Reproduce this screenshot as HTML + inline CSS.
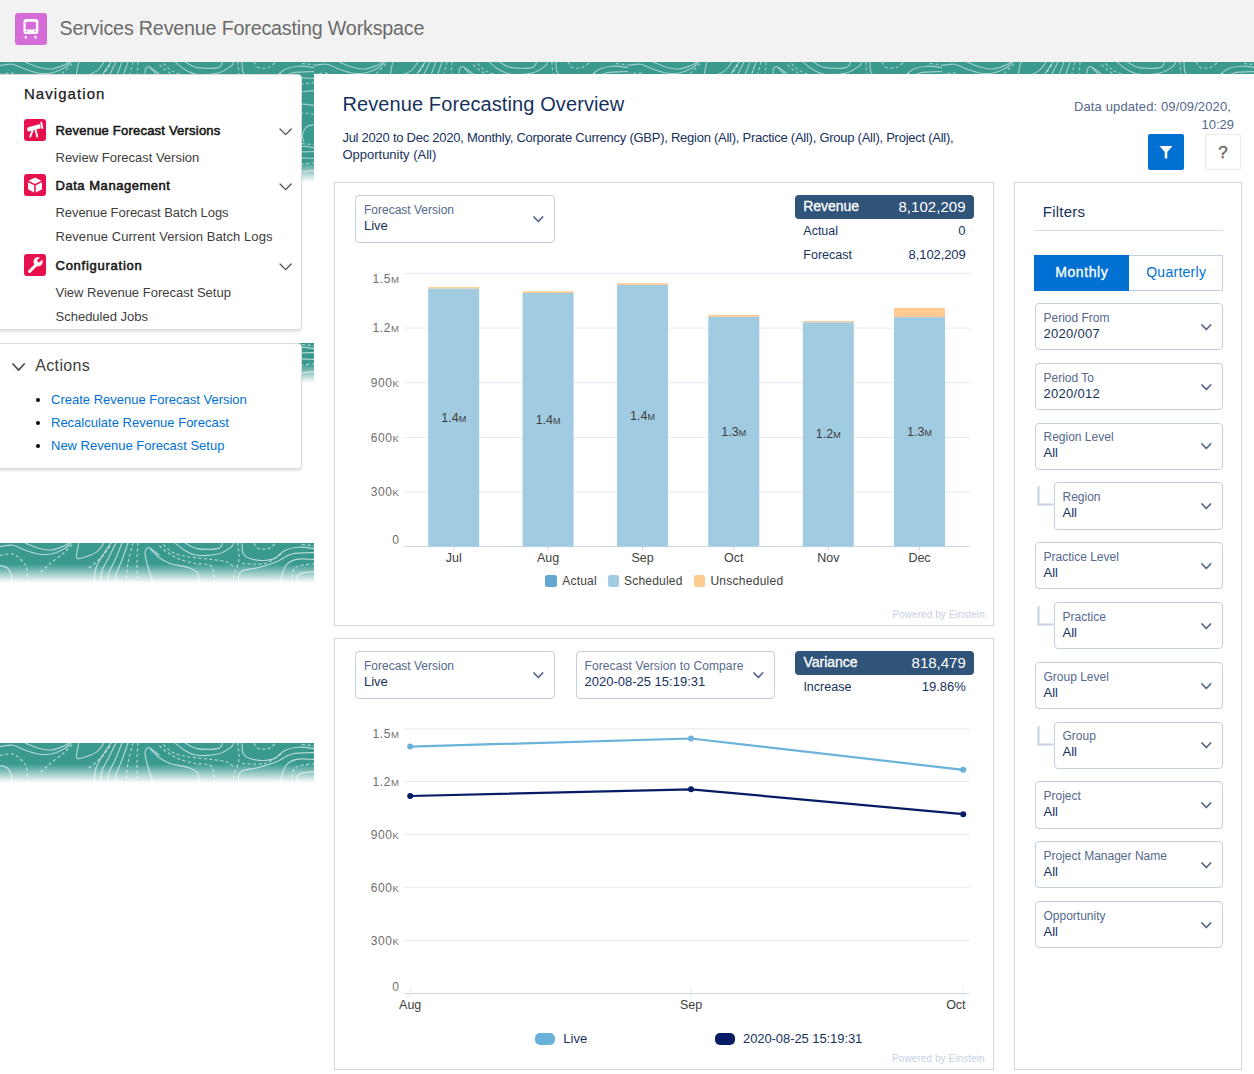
<!DOCTYPE html>
<html><head><meta charset="utf-8">
<style>
*{box-sizing:border-box;margin:0;padding:0}
html,body{width:1254px;height:1074px;overflow:hidden;background:#fff;font-family:"Liberation Sans",sans-serif;color:#16325c}
.abs{position:absolute}
.t{position:absolute;white-space:nowrap}
.sc{font-size:75%}
</style></head>
<body>
<div class="abs" style="left:0px;top:0px;width:1254px;height:62px;background:#f3f2f2"></div>
<div class="abs" style="left:15px;top:13px;width:32px;height:32px;background:#d56cd8;border-radius:3px"></div>
<svg class="abs" style="left:15px;top:13px" width="32" height="32" viewBox="0 0 32 32">
<rect x="8.5" y="6" width="14.8" height="15.1" rx="2.6" fill="#fff"/>
<rect x="10.6" y="8.7" width="10.3" height="7.9" rx="1.3" fill="#d56cd8"/>
<circle cx="11.2" cy="18.6" r="0.8" fill="#d56cd8"/><circle cx="20.2" cy="18.6" r="0.8" fill="#d56cd8"/>
<ellipse cx="10.8" cy="24.2" rx="1.2" ry="1.5" fill="#fff" transform="rotate(30 10.8 24.2)"/>
<ellipse cx="20.4" cy="24.2" rx="1.2" ry="1.5" fill="#fff" transform="rotate(-30 20.4 24.2)"/>
</svg>
<div class="t" style="left:59.50px;top:18.52px;font-size:19.7px;line-height:19.7px;color:#6a6a6a;letter-spacing:-0.181px">Services Revenue Forecasting Workspace</div>
<svg width="0" height="0" style="position:absolute"><defs><g id="pat" fill="none" stroke="#fff" stroke-opacity=".62" stroke-width="1.15"><path d="M0.0 3.5 C2.1 3.3 8.6 1.6 12.8 2.2 C17.1 2.8 21.3 5.8 25.5 7.3 C29.7 8.8 33.8 10.4 38.0 11.0 C42.2 11.6 46.7 11.8 51.0 11.0 C55.3 10.2 60.7 7.8 64.0 6.0 C67.3 4.2 69.8 1.0 71.0 0.0"/><path d="M25.0 0.0 C27.2 0.8 33.7 3.8 38.0 5.0 C42.3 6.2 46.7 7.3 51.0 7.0 C55.3 6.7 60.8 4.3 64.0 3.0 C67.2 1.7 69.0 -0.3 70.0 -1.0"/><path d="M0.0 12.4 C2.1 12.2 9.2 10.2 12.8 11.1 C16.4 11.9 19.4 15.2 21.7 17.5 C24.0 19.9 25.9 21.4 26.8 25.2 C27.8 28.9 27.3 37.5 27.4 40.0" stroke-dasharray="3 2.5"/><path d="M40.8 29.0 C42.5 27.5 47.2 23.2 51.0 20.0 C54.8 16.8 60.0 13.2 63.8 9.9 C67.6 6.6 72.3 1.7 74.0 0.0" stroke-dasharray="3 2.5"/><path d="M0.0 22.6 C1.3 23.0 5.8 23.5 7.7 25.2 C9.6 26.9 11.1 30.3 11.5 32.8 C11.9 35.3 10.4 38.8 10.2 40.0"/><path d="M79.0 -1.0 C78.6 1.4 76.1 11.0 76.5 13.7 C76.9 16.4 78.2 15.8 81.6 15.0 C85.0 14.2 93.2 11.3 97.0 8.6 C100.8 5.9 103.3 0.6 104.6 -1.0"/><path d="M89.0 25.0 C90.8 23.5 96.3 19.2 99.5 16.0 C102.7 12.8 106.1 8.7 108.0 6.0 C109.9 3.3 110.5 1.0 111.0 0.0" stroke-dasharray="3 2.5"/><path d="M111.0 0.0 C109.7 2.0 105.5 7.8 103.0 12.0 C100.5 16.2 97.5 20.3 96.0 25.0 C94.5 29.7 94.3 37.5 94.0 40.0"/><path d="M116.0 0.0 C114.8 2.3 111.3 9.3 109.0 14.0 C106.7 18.7 103.3 23.7 102.0 28.0 C100.7 32.3 101.2 38.0 101.0 40.0"/><path d="M122.0 0.0 C121.0 2.5 118.2 10.0 116.0 15.0 C113.8 20.0 110.3 25.8 109.0 30.0 C107.7 34.2 108.2 38.3 108.0 40.0"/><path d="M128.0 0.0 C127.0 2.8 124.0 11.7 122.0 17.0 C120.0 22.3 117.0 28.2 116.0 32.0 C115.0 35.8 116.0 38.7 116.0 40.0"/><path d="M133.0 0.0 C132.2 3.3 129.2 13.3 128.0 20.0 C126.8 26.7 126.3 36.7 126.0 40.0" stroke-dasharray="3 2.5"/><path d="M138.0 0.0 C137.8 3.3 137.0 13.3 137.0 20.0 C137.0 26.7 137.8 36.7 138.0 40.0" stroke-dasharray="3 2.5"/><path d="M159.4 12.4 C157.7 11.1 151.4 5.1 149.0 4.7 C146.6 4.3 145.2 6.7 145.0 9.9 C144.8 13.1 146.7 19.0 148.0 24.0 C149.3 29.0 152.2 37.3 153.0 40.0"/><path d="M150.0 5.6 C151.3 6.9 154.7 11.2 158.0 13.7 C161.3 16.2 165.0 18.7 170.0 20.5 C175.0 22.3 183.4 22.9 188.0 24.5 C192.6 26.1 195.7 27.4 197.5 30.0 C199.3 32.6 198.8 38.3 199.0 40.0"/><path d="M174.0 -1.0 C175.7 0.3 180.2 4.8 184.0 7.0 C187.8 9.2 191.3 11.6 197.0 12.3 C202.7 13.0 212.3 12.3 218.0 11.0 C223.7 9.7 228.3 6.2 231.0 4.2 C233.7 2.2 233.5 -0.1 234.0 -1.0"/><path d="M184.0 -1.0 C186.2 0.1 191.3 4.5 197.0 5.6 C202.7 6.7 213.7 6.7 218.0 5.6 C222.3 4.5 222.2 0.1 223.0 -1.0"/><path d="M159.5 2.8 C160.8 3.9 164.2 7.3 167.6 9.6 C171.0 11.9 175.3 14.6 180.0 16.4 C184.7 18.2 190.8 19.4 196.0 20.5 C201.2 21.6 207.8 19.8 211.0 23.0 C214.2 26.2 214.3 37.2 215.0 40.0" stroke-dasharray="3 2.5"/><path d="M163.5 1.5 C165.1 2.8 168.9 7.6 173.0 9.6 C177.1 11.6 181.7 12.6 188.0 13.7 C194.3 14.8 204.5 15.5 211.0 16.4 C217.5 17.3 223.2 17.6 227.0 19.0 C230.8 20.4 232.8 23.6 234.0 24.5" stroke-dasharray="3 2.5"/><path d="M238.0 0.0 C238.0 0.7 237.8 1.5 238.0 4.2 C238.2 6.9 239.7 11.6 239.0 16.4 C238.3 21.1 235.1 28.8 234.0 32.7 C232.9 36.6 232.9 38.8 232.7 40.0" stroke-dasharray="3 2.5"/><path d="M242.0 -1.0 C242.2 1.0 241.7 8.1 243.5 11.0 C245.3 13.9 248.2 15.5 253.0 16.4 C257.8 17.3 266.6 18.0 272.0 16.4 C277.4 14.8 281.1 9.0 285.6 7.0 C290.1 5.0 294.3 4.4 299.0 4.2 C303.7 4.0 311.5 5.4 314.0 5.6"/><path d="M254.0 0.0 C254.8 0.9 256.2 4.7 258.5 5.6 C260.8 6.5 265.1 6.5 268.0 5.6 C270.9 4.7 274.7 0.9 276.0 0.0" stroke-dasharray="3 2.5"/><path d="M302.0 1.5L314.0 2.8" stroke-dasharray="3 2.5"/><path d="M242.0 20.5 C244.8 20.6 254.0 21.2 258.5 21.0 C263.0 20.8 264.9 20.9 269.0 19.0 C273.1 17.1 280.7 11.2 283.0 9.6" stroke-dasharray="3 2.5"/><path d="M238.0 40.0 C238.5 38.1 237.6 31.2 241.0 28.6 C244.4 26.0 252.7 26.1 258.5 24.5 C264.3 22.9 270.4 21.2 276.0 19.0 C281.6 16.8 285.7 12.6 292.0 11.0 C298.3 9.4 310.3 9.8 314.0 9.6"/><path d="M280.0 40.0 C280.9 37.2 282.9 26.9 285.6 23.0 C288.3 19.1 291.7 17.5 296.4 16.4 C301.1 15.3 311.1 16.4 314.0 16.4"/><path d="M291.0 40.0 C291.4 37.8 292.4 29.8 293.7 27.0 C295.0 24.2 295.6 24.1 299.0 23.0 C302.4 21.9 311.5 20.9 314.0 20.5" stroke-dasharray="3 2.5"/><path d="M296.4 40.0 C296.8 38.5 296.1 32.9 299.0 31.0 C301.9 29.1 311.5 29.0 314.0 28.6"/></g></defs></svg>
<div class="abs" style="left:0;top:62px;width:1254px;height:120px;overflow:hidden;background:#3a9a90">
<svg width="1254" height="120" style="position:absolute;left:0;top:0;opacity:0.85"><use href="#pat" x="0" y="0"/><use href="#pat" transform="translate(314 40) scale(-1 1)"/><use href="#pat" x="0" y="80"/><use href="#pat" transform="translate(314 120) scale(-1 1)"/><use href="#pat" x="314" y="0"/><use href="#pat" transform="translate(628 40) scale(-1 1)"/><use href="#pat" x="314" y="80"/><use href="#pat" transform="translate(628 120) scale(-1 1)"/><use href="#pat" x="628" y="0"/><use href="#pat" transform="translate(942 40) scale(-1 1)"/><use href="#pat" x="628" y="80"/><use href="#pat" transform="translate(942 120) scale(-1 1)"/><use href="#pat" x="942" y="0"/><use href="#pat" transform="translate(1256 40) scale(-1 1)"/><use href="#pat" x="942" y="80"/><use href="#pat" transform="translate(1256 120) scale(-1 1)"/></svg>
<div class="abs" style="left:0;top:0;width:1254px;height:120px;background:linear-gradient(rgba(255,255,255,0) 0,rgba(255,255,255,0) 100px,#fff 120px)"></div>
</div>
<div class="abs" style="left:0;top:343px;width:314px;height:40px;overflow:hidden;background:#3a9a90">
<svg width="314" height="40" style="position:absolute;left:0;top:0;opacity:1"><use href="#pat" x="0" y="0"/><use href="#pat" transform="translate(314 40) scale(-1 1)"/><use href="#pat" x="314" y="0"/><use href="#pat" transform="translate(628 40) scale(-1 1)"/></svg>
<div class="abs" style="left:0;top:0;width:314px;height:40px;background:linear-gradient(rgba(255,255,255,0) 0,rgba(255,255,255,0) 21px,#fff 40px)"></div>
</div>
<div class="abs" style="left:0;top:543px;width:314px;height:40px;overflow:hidden;background:#3a9a90">
<svg width="314" height="40" style="position:absolute;left:0;top:0;opacity:1"><use href="#pat" x="0" y="0"/><use href="#pat" transform="translate(314 40) scale(-1 1)"/><use href="#pat" x="314" y="0"/><use href="#pat" transform="translate(628 40) scale(-1 1)"/></svg>
<div class="abs" style="left:0;top:0;width:314px;height:40px;background:linear-gradient(rgba(255,255,255,0) 0,rgba(255,255,255,0) 21px,#fff 40px)"></div>
</div>
<div class="abs" style="left:0;top:743px;width:314px;height:40px;overflow:hidden;background:#3a9a90">
<svg width="314" height="40" style="position:absolute;left:0;top:0;opacity:1"><use href="#pat" x="0" y="0"/><use href="#pat" transform="translate(314 40) scale(-1 1)"/><use href="#pat" x="314" y="0"/><use href="#pat" transform="translate(628 40) scale(-1 1)"/></svg>
<div class="abs" style="left:0;top:0;width:314px;height:40px;background:linear-gradient(rgba(255,255,255,0) 0,rgba(255,255,255,0) 21px,#fff 40px)"></div>
</div>
<div class="abs" style="left:-5px;top:74px;width:307px;height:256px;background:#fff;border:1px solid #dddbda;border-radius:4px;box-shadow:0 2px 2px rgba(0,0,0,.10)"></div>
<div class="abs" style="left:-5px;top:343px;width:307px;height:126px;background:#fff;border:1px solid #dddbda;border-radius:4px;box-shadow:0 2px 2px rgba(0,0,0,.10)"></div>
<div class="t" style="left:23.90px;top:86.10px;font-size:15px;line-height:15px;color:#181818;letter-spacing:1.073px;-webkit-text-stroke:0.25px #181818">Navigation</div>
<div class="abs" style="left:24px;top:119px;width:22px;height:22px;background:#e8104c;border-radius:3px"></div>
<svg class="abs" style="left:24px;top:119px" width="22" height="22" viewBox="0 0 22 22">
<path d="M3.2 9.6 Q3 8.6 4.2 8.2 L16.2 5 L16.6 9.2 L5 12.4 Q3.6 12.6 3.4 11.4 Z" fill="#fff"/>
<path d="M17.3 3.6 L18.3 9" stroke="#fff" stroke-width="1.9" stroke-linecap="round"/>
<path d="M8.6 11.6 L6.3 17.6" stroke="#fff" stroke-width="1.9" stroke-linecap="round"/>
<path d="M11.6 11 L13.2 17.6" stroke="#fff" stroke-width="1.9" stroke-linecap="round"/>
</svg>
<div class="t" style="left:55.50px;top:123.79px;font-size:13px;line-height:13px;color:#181818;letter-spacing:0.213px;-webkit-text-stroke:0.55px #181818">Revenue Forecast Versions</div>
<svg class="abs" style="left:277.5px;top:127.19999999999999px" width="15.2" height="9.6" viewBox="0 0 15.2 9.6"><path d="M2.0 2.0 L7.6 7.6 L13.2 2.0" fill="none" stroke="#514f4d" stroke-width="1.3" stroke-linecap="round" stroke-linejoin="round"/></svg>
<div class="t" style="left:55.50px;top:150.79px;font-size:13px;line-height:13px;color:#3e3e3c">Review Forecast Version</div>
<div class="abs" style="left:24px;top:174px;width:22px;height:22px;background:#e8104c;border-radius:3px"></div>
<svg class="abs" style="left:24px;top:174px" width="22" height="22" viewBox="0 0 22 22">
<path d="M11 3.5 L17.5 6.8 L11 10 L4.5 6.8 Z" fill="#fff"/>
<path d="M4 8.2 L10.2 11.3 L10.2 18.5 L4 15.3 Z" fill="#fff"/>
<path d="M18 8.2 L11.8 11.3 L11.8 18.5 L18 15.3 Z" fill="#fff"/>
</svg>
<div class="t" style="left:55.50px;top:178.79px;font-size:13px;line-height:13px;color:#181818;letter-spacing:0.537px;-webkit-text-stroke:0.55px #181818">Data Management</div>
<svg class="abs" style="left:277.5px;top:182.2px" width="15.2" height="9.6" viewBox="0 0 15.2 9.6"><path d="M2.0 2.0 L7.6 7.6 L13.2 2.0" fill="none" stroke="#514f4d" stroke-width="1.3" stroke-linecap="round" stroke-linejoin="round"/></svg>
<div class="t" style="left:55.50px;top:205.59px;font-size:13px;line-height:13px;color:#3e3e3c;letter-spacing:-0.069px">Revenue Forecast Batch Logs</div>
<div class="t" style="left:55.50px;top:230.39px;font-size:13px;line-height:13px;color:#3e3e3c;letter-spacing:0.070px">Revenue Current Version Batch Logs</div>
<div class="abs" style="left:24px;top:254px;width:22px;height:22px;background:#e8104c;border-radius:3px"></div>
<svg class="abs" style="left:24px;top:254px" width="22" height="22" viewBox="0 0 22 22">
<path d="M5.6 17.4 L12 11" stroke="#fff" stroke-width="3" stroke-linecap="round"/>
<circle cx="14.1" cy="7.8" r="4.6" fill="#fff"/>
<path d="M12.8 6.6 L15 8.8 L20.5 3.3 L18.3 1.1 Z" fill="#e8104c"/>
</svg>
<div class="t" style="left:55.50px;top:258.79px;font-size:13px;line-height:13px;color:#181818;letter-spacing:0.744px;-webkit-text-stroke:0.55px #181818">Configuration</div>
<svg class="abs" style="left:277.5px;top:262.2px" width="15.2" height="9.6" viewBox="0 0 15.2 9.6"><path d="M2.0 2.0 L7.6 7.6 L13.2 2.0" fill="none" stroke="#514f4d" stroke-width="1.3" stroke-linecap="round" stroke-linejoin="round"/></svg>
<div class="t" style="left:55.50px;top:285.59px;font-size:13px;line-height:13px;color:#3e3e3c">View Revenue Forecast Setup</div>
<div class="t" style="left:55.50px;top:310.39px;font-size:13px;line-height:13px;color:#3e3e3c">Scheduled Jobs</div>
<svg class="abs" style="left:11.3px;top:361.6px" width="15.2" height="10.2" viewBox="0 0 15.2 10.2"><path d="M2.0 2.0 L7.6 8.2 L13.2 2.0" fill="none" stroke="#514f4d" stroke-width="1.7" stroke-linecap="round" stroke-linejoin="round"/></svg>
<div class="t" style="left:35.20px;top:357.75px;font-size:16px;line-height:16px;color:#3e3e3c;letter-spacing:0.362px">Actions</div>
<div class="abs" style="left:36.4px;top:397.5px;width:4px;height:4px;background:#080707;border-radius:50%"></div>
<div class="t" style="left:51.00px;top:392.99px;font-size:13px;line-height:13px;color:#0070d2">Create Revenue Forecast Version</div>
<div class="abs" style="left:36.4px;top:420.5px;width:4px;height:4px;background:#080707;border-radius:50%"></div>
<div class="t" style="left:51.00px;top:415.99px;font-size:13px;line-height:13px;color:#0070d2">Recalculate Revenue Forecast</div>
<div class="abs" style="left:36.4px;top:443.5px;width:4px;height:4px;background:#080707;border-radius:50%"></div>
<div class="t" style="left:51.00px;top:438.99px;font-size:13px;line-height:13px;color:#0070d2">New Revenue Forecast Setup</div>
<div class="abs" style="left:314px;top:74px;width:940px;height:1000px;background:#fff"></div>
<div class="t" style="left:342.40px;top:94.07px;font-size:20px;line-height:20px;color:#16325c;letter-spacing:0.107px">Revenue Forecasting Overview</div>
<div class="t" style="left:342.40px;top:130.69px;font-size:13px;line-height:13px;color:#16325c;letter-spacing:-0.253px">Jul 2020 to Dec 2020, Monthly, Corporate Currency (GBP), Region (All), Practice (All), Group (All), Project (All),</div>
<div class="t" style="left:342.40px;top:148.49px;font-size:13px;line-height:13px;color:#16325c">Opportunity (All)</div>
<div class="t" style="left:1074.00px;top:99.99px;font-size:13px;line-height:13px;color:#54698d;letter-spacing:0.122px">Data updated: 09/09/2020,</div>
<div class="t" style="left:1201.47px;top:117.79px;font-size:13px;line-height:13px;color:#54698d">10:29</div>
<div class="abs" style="left:1148px;top:134px;width:35.5px;height:35.5px;background:#0070d2;border-radius:2px"></div>
<svg class="abs" style="left:1148px;top:134px" width="36" height="36" viewBox="0 0 36 36">
<path d="M11.5 12 L24.5 12 L19.3 18 L19.3 24.5 L16.7 24.5 L16.7 18 Z" fill="#fff"/></svg>
<div class="abs" style="left:1205px;top:134px;width:35.5px;height:35.5px;background:#fff;border:1px solid #ebebeb;border-radius:2px"></div>
<div class="t" style="left:1218.27px;top:144.01px;font-size:17px;line-height:17px;color:#706e6b;-webkit-text-stroke:0.5px #706e6b">?</div>
<div class="abs" style="left:334px;top:182px;width:660px;height:444px;border:1px solid #d8d8d8"></div>
<div class="abs" style="left:334px;top:638px;width:660px;height:432px;border:1px solid #d8d8d8"></div>
<div class="abs" style="left:1014px;top:182px;width:228px;height:888px;border:1px solid #d8d8d8"></div>
<div class="abs" style="left:355px;top:195px;width:200px;height:47.5px;border:1px solid #c2cfdd;border-radius:4px;background:#fff"></div>
<div class="t" style="left:364.00px;top:203.74px;font-size:12px;line-height:12px;color:#54698d">Forecast Version</div>
<div class="t" style="left:364.00px;top:218.79px;font-size:13px;line-height:13px;color:#16325c">Live</div>
<svg class="abs" style="left:531.9px;top:214.7px" width="12.6" height="8.5" viewBox="0 0 12.6 8.5"><path d="M2.0 2.0 L6.3 6.5 L10.6 2.0" fill="none" stroke="#54698d" stroke-width="1.8" stroke-linecap="round" stroke-linejoin="round"/></svg>
<div class="abs" style="left:795px;top:195px;width:179px;height:23.5px;background:#2f5379;border-radius:4px"></div>
<div class="t" style="left:803.30px;top:199.15px;font-size:14px;line-height:14px;color:#fff;letter-spacing:-0.062px;-webkit-text-stroke:0.3px #fff">Revenue</div>
<div class="t" style="left:898.40px;top:198.80px;font-size:15px;line-height:15px;color:#fff;letter-spacing:0.053px">8,102,209</div>
<div class="t" style="left:803.30px;top:225.32px;font-size:12.5px;line-height:12.5px;color:#16325c">Actual</div>
<div class="t" style="left:958.37px;top:223.89px;font-size:13px;line-height:13px;color:#16325c">0</div>
<div class="t" style="left:803.30px;top:249.42px;font-size:12.5px;line-height:12.5px;color:#16325c">Forecast</div>
<div class="t" style="left:908.60px;top:247.99px;font-size:13px;line-height:13px;color:#16325c;letter-spacing:-0.092px">8,102,209</div>
<svg class="abs" style="left:0;top:0" width="1254" height="1074"><line x1="404" y1="273.4" x2="970" y2="273.4" stroke="#e5eaf1" stroke-width="1"/><line x1="404" y1="328.1" x2="970" y2="328.1" stroke="#e5eaf1" stroke-width="1"/><line x1="404" y1="382.7" x2="970" y2="382.7" stroke="#e5eaf1" stroke-width="1"/><line x1="404" y1="437.4" x2="970" y2="437.4" stroke="#e5eaf1" stroke-width="1"/><line x1="404" y1="492.0" x2="970" y2="492.0" stroke="#e5eaf1" stroke-width="1"/><line x1="404" y1="546.6" x2="970" y2="546.6" stroke="#c9d7e6" stroke-width="1"/><rect x="428.2" y="287.1" width="51" height="1.6" fill="#fdca8f"/><rect x="428.2" y="288.7" width="51" height="257.9" fill="#a1cbe1"/><line x1="453.7" y1="546.6" x2="453.7" y2="551" stroke="#c9d7e6" stroke-width="1"/><rect x="522.6" y="291.4" width="51" height="1.6" fill="#fdca8f"/><rect x="522.6" y="293.0" width="51" height="253.6" fill="#a1cbe1"/><line x1="548.1" y1="546.6" x2="548.1" y2="551" stroke="#c9d7e6" stroke-width="1"/><rect x="617.0" y="283.2" width="51" height="1.7" fill="#fdca8f"/><rect x="617.0" y="284.9" width="51" height="261.7" fill="#a1cbe1"/><line x1="642.5" y1="546.6" x2="642.5" y2="551" stroke="#c9d7e6" stroke-width="1"/><rect x="708.3" y="314.9" width="51" height="1.9" fill="#fdca8f"/><rect x="708.3" y="316.8" width="51" height="229.8" fill="#a1cbe1"/><line x1="733.8" y1="546.6" x2="733.8" y2="551" stroke="#c9d7e6" stroke-width="1"/><rect x="802.8" y="321.0" width="51" height="1.4" fill="#fdca8f"/><rect x="802.8" y="322.4" width="51" height="224.2" fill="#a1cbe1"/><line x1="828.3" y1="546.6" x2="828.3" y2="551" stroke="#c9d7e6" stroke-width="1"/><rect x="894.0" y="307.9" width="51" height="9.2" fill="#fdca8f"/><rect x="894.0" y="317.1" width="51" height="229.5" fill="#a1cbe1"/><line x1="919.5" y1="546.6" x2="919.5" y2="551" stroke="#c9d7e6" stroke-width="1"/></svg>
<div class="t" style="left:441.26px;top:411.57px;font-size:12.5px;line-height:12.5px;color:#3e3e3c">1.4<span style="font-size:9px">M</span></div>
<div class="t" style="left:445.71px;top:551.62px;font-size:12.5px;line-height:12.5px;color:#3e3e3c">Jul</div>
<div class="t" style="left:535.66px;top:413.72px;font-size:12.5px;line-height:12.5px;color:#3e3e3c">1.4<span style="font-size:9px">M</span></div>
<div class="t" style="left:536.98px;top:551.62px;font-size:12.5px;line-height:12.5px;color:#3e3e3c">Aug</div>
<div class="t" style="left:630.06px;top:409.67px;font-size:12.5px;line-height:12.5px;color:#3e3e3c">1.4<span style="font-size:9px">M</span></div>
<div class="t" style="left:631.38px;top:551.62px;font-size:12.5px;line-height:12.5px;color:#3e3e3c">Sep</div>
<div class="t" style="left:721.36px;top:425.62px;font-size:12.5px;line-height:12.5px;color:#3e3e3c">1.3<span style="font-size:9px">M</span></div>
<div class="t" style="left:724.08px;top:551.62px;font-size:12.5px;line-height:12.5px;color:#3e3e3c">Oct</div>
<div class="t" style="left:815.86px;top:428.42px;font-size:12.5px;line-height:12.5px;color:#3e3e3c">1.2<span style="font-size:9px">M</span></div>
<div class="t" style="left:817.19px;top:551.62px;font-size:12.5px;line-height:12.5px;color:#3e3e3c">Nov</div>
<div class="t" style="left:907.06px;top:425.77px;font-size:12.5px;line-height:12.5px;color:#3e3e3c">1.3<span style="font-size:9px">M</span></div>
<div class="t" style="left:908.39px;top:551.62px;font-size:12.5px;line-height:12.5px;color:#3e3e3c">Dec</div>
<div class="t" style="left:372.56px;top:272.64px;font-size:12px;line-height:12px;color:#706e6b;letter-spacing:0.55px">1.5<span style="font-size:9.5px">M</span></div>
<div class="t" style="left:372.56px;top:322.24px;font-size:12px;line-height:12px;color:#706e6b;letter-spacing:0.55px">1.2<span style="font-size:9.5px">M</span></div>
<div class="t" style="left:370.79px;top:376.84px;font-size:12px;line-height:12px;color:#706e6b;letter-spacing:0.55px">900<span style="font-size:9.5px">K</span></div>
<div class="t" style="left:370.79px;top:431.54px;font-size:12px;line-height:12px;color:#706e6b;letter-spacing:0.55px">600<span style="font-size:9.5px">K</span></div>
<div class="t" style="left:370.79px;top:486.14px;font-size:12px;line-height:12px;color:#706e6b;letter-spacing:0.55px">300<span style="font-size:9.5px">K</span></div>
<div class="t" style="left:392.13px;top:533.54px;font-size:12px;line-height:12px;color:#706e6b;letter-spacing:0.55px">0<span style="font-size:9.5px"></span></div>
<div class="abs" style="left:545.1px;top:575.1px;width:11.8px;height:11.5px;background:#62a8d0;border-radius:2.5px"></div>
<div class="t" style="left:562.30px;top:574.84px;font-size:12px;line-height:12px;color:#3e3e3c;letter-spacing:0.192px">Actual</div>
<div class="abs" style="left:607.5px;top:575.1px;width:11.8px;height:11.5px;background:#a1cbe1;border-radius:2.5px"></div>
<div class="t" style="left:624.10px;top:574.84px;font-size:12px;line-height:12px;color:#3e3e3c;letter-spacing:0.188px">Scheduled</div>
<div class="abs" style="left:693.7px;top:575.1px;width:11.8px;height:11.5px;background:#fdca8f;border-radius:2.5px"></div>
<div class="t" style="left:710.40px;top:574.84px;font-size:12px;line-height:12px;color:#3e3e3c;letter-spacing:0.269px">Unscheduled</div>
<div class="t" style="left:892.40px;top:609.53px;font-size:10px;line-height:10px;color:#c5d1e3;letter-spacing:0.065px">Powered by Einstein</div>
<div class="abs" style="left:355px;top:651px;width:200px;height:47.5px;border:1px solid #c2cfdd;border-radius:4px;background:#fff"></div>
<div class="t" style="left:364.00px;top:659.74px;font-size:12px;line-height:12px;color:#54698d">Forecast Version</div>
<div class="t" style="left:364.00px;top:674.79px;font-size:13px;line-height:13px;color:#16325c">Live</div>
<svg class="abs" style="left:531.9px;top:670.7px" width="12.6" height="8.5" viewBox="0 0 12.6 8.5"><path d="M2.0 2.0 L6.3 6.5 L10.6 2.0" fill="none" stroke="#54698d" stroke-width="1.8" stroke-linecap="round" stroke-linejoin="round"/></svg>
<div class="abs" style="left:575.5px;top:651px;width:199px;height:47.5px;border:1px solid #c2cfdd;border-radius:4px;background:#fff"></div>
<div class="t" style="left:584.50px;top:659.74px;font-size:12px;line-height:12px;color:#54698d;letter-spacing:0.109px">Forecast Version to Compare</div>
<div class="t" style="left:584.50px;top:674.79px;font-size:13px;line-height:13px;color:#16325c">2020-08-25 15:19:31</div>
<svg class="abs" style="left:752.4px;top:670.7px" width="12.6" height="8.5" viewBox="0 0 12.6 8.5"><path d="M2.0 2.0 L6.3 6.5 L10.6 2.0" fill="none" stroke="#54698d" stroke-width="1.8" stroke-linecap="round" stroke-linejoin="round"/></svg>
<div class="abs" style="left:795px;top:651px;width:179px;height:23.5px;background:#2f5379;border-radius:4px"></div>
<div class="t" style="left:803.40px;top:654.95px;font-size:14px;line-height:14px;color:#fff;-webkit-text-stroke:0.3px #fff">Variance</div>
<div class="t" style="left:911.58px;top:654.60px;font-size:15px;line-height:15px;color:#fff">818,479</div>
<div class="t" style="left:803.40px;top:681.32px;font-size:12.5px;line-height:12.5px;color:#16325c">Increase</div>
<div class="t" style="left:921.71px;top:679.89px;font-size:13px;line-height:13px;color:#16325c">19.86%</div>
<svg class="abs" style="left:0;top:0" width="1254" height="1074"><line x1="404.5" y1="728.8" x2="969.6" y2="728.8" stroke="#e5eaf1" stroke-width="1"/><line x1="404.5" y1="781.7" x2="969.6" y2="781.7" stroke="#e5eaf1" stroke-width="1"/><line x1="404.5" y1="834.7" x2="969.6" y2="834.7" stroke="#e5eaf1" stroke-width="1"/><line x1="404.5" y1="887.6" x2="969.6" y2="887.6" stroke="#e5eaf1" stroke-width="1"/><line x1="404.5" y1="940.5" x2="969.6" y2="940.5" stroke="#e5eaf1" stroke-width="1"/><line x1="404.5" y1="993.5" x2="969.6" y2="993.5" stroke="#c9d7e6" stroke-width="1"/><line x1="410.2" y1="987" x2="410.2" y2="998" stroke="#e5eaf1" stroke-width="1"/><line x1="691.0" y1="987" x2="691.0" y2="998" stroke="#e5eaf1" stroke-width="1"/><line x1="963.2" y1="987" x2="963.2" y2="998" stroke="#e5eaf1" stroke-width="1"/><polyline points="410.2,746.6 691,738.5 963.2,769.8" fill="none" stroke="#6ab2d9" stroke-width="2.2"/><polyline points="410.2,796 691,789.3 963.2,814.2" fill="none" stroke="#061c64" stroke-width="2.2"/><circle cx="410.2" cy="746.6" r="3" fill="#6ab2d9"/><circle cx="691.0" cy="738.5" r="3" fill="#6ab2d9"/><circle cx="963.2" cy="769.8" r="3" fill="#6ab2d9"/><circle cx="410.2" cy="796.0" r="3" fill="#061c64"/><circle cx="691.0" cy="789.3" r="3" fill="#061c64"/><circle cx="963.2" cy="814.2" r="3" fill="#061c64"/></svg>
<div class="t" style="left:372.56px;top:728.34px;font-size:12px;line-height:12px;color:#706e6b;letter-spacing:0.55px">1.5<span style="font-size:9.5px">M</span></div>
<div class="t" style="left:372.56px;top:775.84px;font-size:12px;line-height:12px;color:#706e6b;letter-spacing:0.55px">1.2<span style="font-size:9.5px">M</span></div>
<div class="t" style="left:370.79px;top:828.84px;font-size:12px;line-height:12px;color:#706e6b;letter-spacing:0.55px">900<span style="font-size:9.5px">K</span></div>
<div class="t" style="left:370.79px;top:881.74px;font-size:12px;line-height:12px;color:#706e6b;letter-spacing:0.55px">600<span style="font-size:9.5px">K</span></div>
<div class="t" style="left:370.79px;top:934.64px;font-size:12px;line-height:12px;color:#706e6b;letter-spacing:0.55px">300<span style="font-size:9.5px">K</span></div>
<div class="t" style="left:392.13px;top:981.04px;font-size:12px;line-height:12px;color:#706e6b;letter-spacing:0.55px">0<span style="font-size:9.5px"></span></div>
<div class="t" style="left:399.08px;top:998.92px;font-size:12.5px;line-height:12.5px;color:#3e3e3c">Aug</div>
<div class="t" style="left:679.88px;top:998.92px;font-size:12.5px;line-height:12.5px;color:#3e3e3c">Sep</div>
<div class="t" style="left:946.15px;top:998.92px;font-size:12.5px;line-height:12.5px;color:#3e3e3c">Oct</div>
<div class="abs" style="left:535.1px;top:1032.8px;width:20px;height:12.3px;background:#6ab2d9;border-radius:5px"></div>
<div class="t" style="left:563.30px;top:1032.09px;font-size:13px;line-height:13px;color:#16325c">Live</div>
<div class="abs" style="left:714.8px;top:1033px;width:20.4px;height:12.1px;background:#061c64;border-radius:5px"></div>
<div class="t" style="left:743.00px;top:1031.69px;font-size:13px;line-height:13px;color:#16325c;letter-spacing:-0.079px">2020-08-25 15:19:31</div>
<div class="t" style="left:892.10px;top:1053.53px;font-size:10px;line-height:10px;color:#c5d1e3;letter-spacing:0.076px">Powered by Einstein</div>
<div class="t" style="left:1042.80px;top:203.80px;font-size:15px;line-height:15px;color:#16325c;letter-spacing:0.224px">Filters</div>
<div class="abs" style="left:1034.4px;top:229.5px;width:188.3px;height:1px;background:#d8dde6"></div>
<div class="abs" style="left:1034px;top:255px;width:189px;height:36px;border:1px solid #c2cfdd;background:#fff"></div>
<div class="abs" style="left:1034px;top:255px;width:95.2px;height:36px;background:#0070d2"></div>
<div class="t" style="left:1055.15px;top:265.25px;font-size:14px;line-height:14px;color:#fff;letter-spacing:0.612px;-webkit-text-stroke:0.3px #fff">Monthly</div>
<div class="t" style="left:1146.20px;top:265.25px;font-size:14px;line-height:14px;color:#0070d2;letter-spacing:0.270px">Quarterly</div>
<div class="abs" style="left:1034.5px;top:303.0px;width:188.2px;height:47.3px;border:1px solid #c2cfdd;border-radius:4px;background:#fff"></div>
<div class="t" style="left:1043.50px;top:311.74px;font-size:12px;line-height:12px;color:#54698d">Period From</div>
<div class="t" style="left:1043.50px;top:326.79px;font-size:13px;line-height:13px;color:#16325c;letter-spacing:0.300px">2020/007</div>
<svg class="abs" style="left:1199.9px;top:322.7px" width="12.6" height="8.5" viewBox="0 0 12.6 8.5"><path d="M2.0 2.0 L6.3 6.5 L10.6 2.0" fill="none" stroke="#54698d" stroke-width="1.8" stroke-linecap="round" stroke-linejoin="round"/></svg>
<div class="abs" style="left:1034.5px;top:362.8px;width:188.2px;height:47.3px;border:1px solid #c2cfdd;border-radius:4px;background:#fff"></div>
<div class="t" style="left:1043.50px;top:371.54px;font-size:12px;line-height:12px;color:#54698d">Period To</div>
<div class="t" style="left:1043.50px;top:386.59px;font-size:13px;line-height:13px;color:#16325c;letter-spacing:0.300px">2020/012</div>
<svg class="abs" style="left:1199.9px;top:382.5px" width="12.6" height="8.5" viewBox="0 0 12.6 8.5"><path d="M2.0 2.0 L6.3 6.5 L10.6 2.0" fill="none" stroke="#54698d" stroke-width="1.8" stroke-linecap="round" stroke-linejoin="round"/></svg>
<div class="abs" style="left:1034.5px;top:422.6px;width:188.2px;height:47.3px;border:1px solid #c2cfdd;border-radius:4px;background:#fff"></div>
<div class="t" style="left:1043.50px;top:431.34px;font-size:12px;line-height:12px;color:#54698d">Region Level</div>
<div class="t" style="left:1043.50px;top:446.39px;font-size:13px;line-height:13px;color:#16325c">All</div>
<svg class="abs" style="left:1199.9px;top:442.3px" width="12.6" height="8.5" viewBox="0 0 12.6 8.5"><path d="M2.0 2.0 L6.3 6.5 L10.6 2.0" fill="none" stroke="#54698d" stroke-width="1.8" stroke-linecap="round" stroke-linejoin="round"/></svg>
<div class="abs" style="left:1053.5px;top:482.4px;width:169.2px;height:47.3px;border:1px solid #c2cfdd;border-radius:4px;background:#fff"></div>
<div class="t" style="left:1062.50px;top:491.14px;font-size:12px;line-height:12px;color:#54698d">Region</div>
<div class="t" style="left:1062.50px;top:506.19px;font-size:13px;line-height:13px;color:#16325c">All</div>
<svg class="abs" style="left:1199.9px;top:502.09999999999997px" width="12.6" height="8.5" viewBox="0 0 12.6 8.5"><path d="M2.0 2.0 L6.3 6.5 L10.6 2.0" fill="none" stroke="#54698d" stroke-width="1.8" stroke-linecap="round" stroke-linejoin="round"/></svg>
<svg class="abs" style="left:1036px;top:485.4px" width="20" height="24"><path d="M2.5 1 L2.5 19.5 L17.5 19.5" fill="none" stroke="#c5d1e0" stroke-width="2"/></svg>
<div class="abs" style="left:1034.5px;top:542.2px;width:188.2px;height:47.3px;border:1px solid #c2cfdd;border-radius:4px;background:#fff"></div>
<div class="t" style="left:1043.50px;top:550.94px;font-size:12px;line-height:12px;color:#54698d">Practice Level</div>
<div class="t" style="left:1043.50px;top:565.99px;font-size:13px;line-height:13px;color:#16325c">All</div>
<svg class="abs" style="left:1199.9px;top:561.9000000000001px" width="12.6" height="8.5" viewBox="0 0 12.6 8.5"><path d="M2.0 2.0 L6.3 6.5 L10.6 2.0" fill="none" stroke="#54698d" stroke-width="1.8" stroke-linecap="round" stroke-linejoin="round"/></svg>
<div class="abs" style="left:1053.5px;top:602.0px;width:169.2px;height:47.3px;border:1px solid #c2cfdd;border-radius:4px;background:#fff"></div>
<div class="t" style="left:1062.50px;top:610.74px;font-size:12px;line-height:12px;color:#54698d">Practice</div>
<div class="t" style="left:1062.50px;top:625.79px;font-size:13px;line-height:13px;color:#16325c">All</div>
<svg class="abs" style="left:1199.9px;top:621.7px" width="12.6" height="8.5" viewBox="0 0 12.6 8.5"><path d="M2.0 2.0 L6.3 6.5 L10.6 2.0" fill="none" stroke="#54698d" stroke-width="1.8" stroke-linecap="round" stroke-linejoin="round"/></svg>
<svg class="abs" style="left:1036px;top:605.0px" width="20" height="24"><path d="M2.5 1 L2.5 19.5 L17.5 19.5" fill="none" stroke="#c5d1e0" stroke-width="2"/></svg>
<div class="abs" style="left:1034.5px;top:661.8px;width:188.2px;height:47.3px;border:1px solid #c2cfdd;border-radius:4px;background:#fff"></div>
<div class="t" style="left:1043.50px;top:670.54px;font-size:12px;line-height:12px;color:#54698d">Group Level</div>
<div class="t" style="left:1043.50px;top:685.59px;font-size:13px;line-height:13px;color:#16325c">All</div>
<svg class="abs" style="left:1199.9px;top:681.5px" width="12.6" height="8.5" viewBox="0 0 12.6 8.5"><path d="M2.0 2.0 L6.3 6.5 L10.6 2.0" fill="none" stroke="#54698d" stroke-width="1.8" stroke-linecap="round" stroke-linejoin="round"/></svg>
<div class="abs" style="left:1053.5px;top:721.5999999999999px;width:169.2px;height:47.3px;border:1px solid #c2cfdd;border-radius:4px;background:#fff"></div>
<div class="t" style="left:1062.50px;top:730.34px;font-size:12px;line-height:12px;color:#54698d">Group</div>
<div class="t" style="left:1062.50px;top:745.39px;font-size:13px;line-height:13px;color:#16325c">All</div>
<svg class="abs" style="left:1199.9px;top:741.3px" width="12.6" height="8.5" viewBox="0 0 12.6 8.5"><path d="M2.0 2.0 L6.3 6.5 L10.6 2.0" fill="none" stroke="#54698d" stroke-width="1.8" stroke-linecap="round" stroke-linejoin="round"/></svg>
<svg class="abs" style="left:1036px;top:724.6px" width="20" height="24"><path d="M2.5 1 L2.5 19.5 L17.5 19.5" fill="none" stroke="#c5d1e0" stroke-width="2"/></svg>
<div class="abs" style="left:1034.5px;top:781.4px;width:188.2px;height:47.3px;border:1px solid #c2cfdd;border-radius:4px;background:#fff"></div>
<div class="t" style="left:1043.50px;top:790.14px;font-size:12px;line-height:12px;color:#54698d">Project</div>
<div class="t" style="left:1043.50px;top:805.19px;font-size:13px;line-height:13px;color:#16325c">All</div>
<svg class="abs" style="left:1199.9px;top:801.1px" width="12.6" height="8.5" viewBox="0 0 12.6 8.5"><path d="M2.0 2.0 L6.3 6.5 L10.6 2.0" fill="none" stroke="#54698d" stroke-width="1.8" stroke-linecap="round" stroke-linejoin="round"/></svg>
<div class="abs" style="left:1034.5px;top:841.1999999999999px;width:188.2px;height:47.3px;border:1px solid #c2cfdd;border-radius:4px;background:#fff"></div>
<div class="t" style="left:1043.50px;top:849.94px;font-size:12px;line-height:12px;color:#54698d">Project Manager Name</div>
<div class="t" style="left:1043.50px;top:864.99px;font-size:13px;line-height:13px;color:#16325c">All</div>
<svg class="abs" style="left:1199.9px;top:860.9px" width="12.6" height="8.5" viewBox="0 0 12.6 8.5"><path d="M2.0 2.0 L6.3 6.5 L10.6 2.0" fill="none" stroke="#54698d" stroke-width="1.8" stroke-linecap="round" stroke-linejoin="round"/></svg>
<div class="abs" style="left:1034.5px;top:901.0px;width:188.2px;height:47.3px;border:1px solid #c2cfdd;border-radius:4px;background:#fff"></div>
<div class="t" style="left:1043.50px;top:909.74px;font-size:12px;line-height:12px;color:#54698d">Opportunity</div>
<div class="t" style="left:1043.50px;top:924.79px;font-size:13px;line-height:13px;color:#16325c">All</div>
<svg class="abs" style="left:1199.9px;top:920.7px" width="12.6" height="8.5" viewBox="0 0 12.6 8.5"><path d="M2.0 2.0 L6.3 6.5 L10.6 2.0" fill="none" stroke="#54698d" stroke-width="1.8" stroke-linecap="round" stroke-linejoin="round"/></svg>
</body></html>
